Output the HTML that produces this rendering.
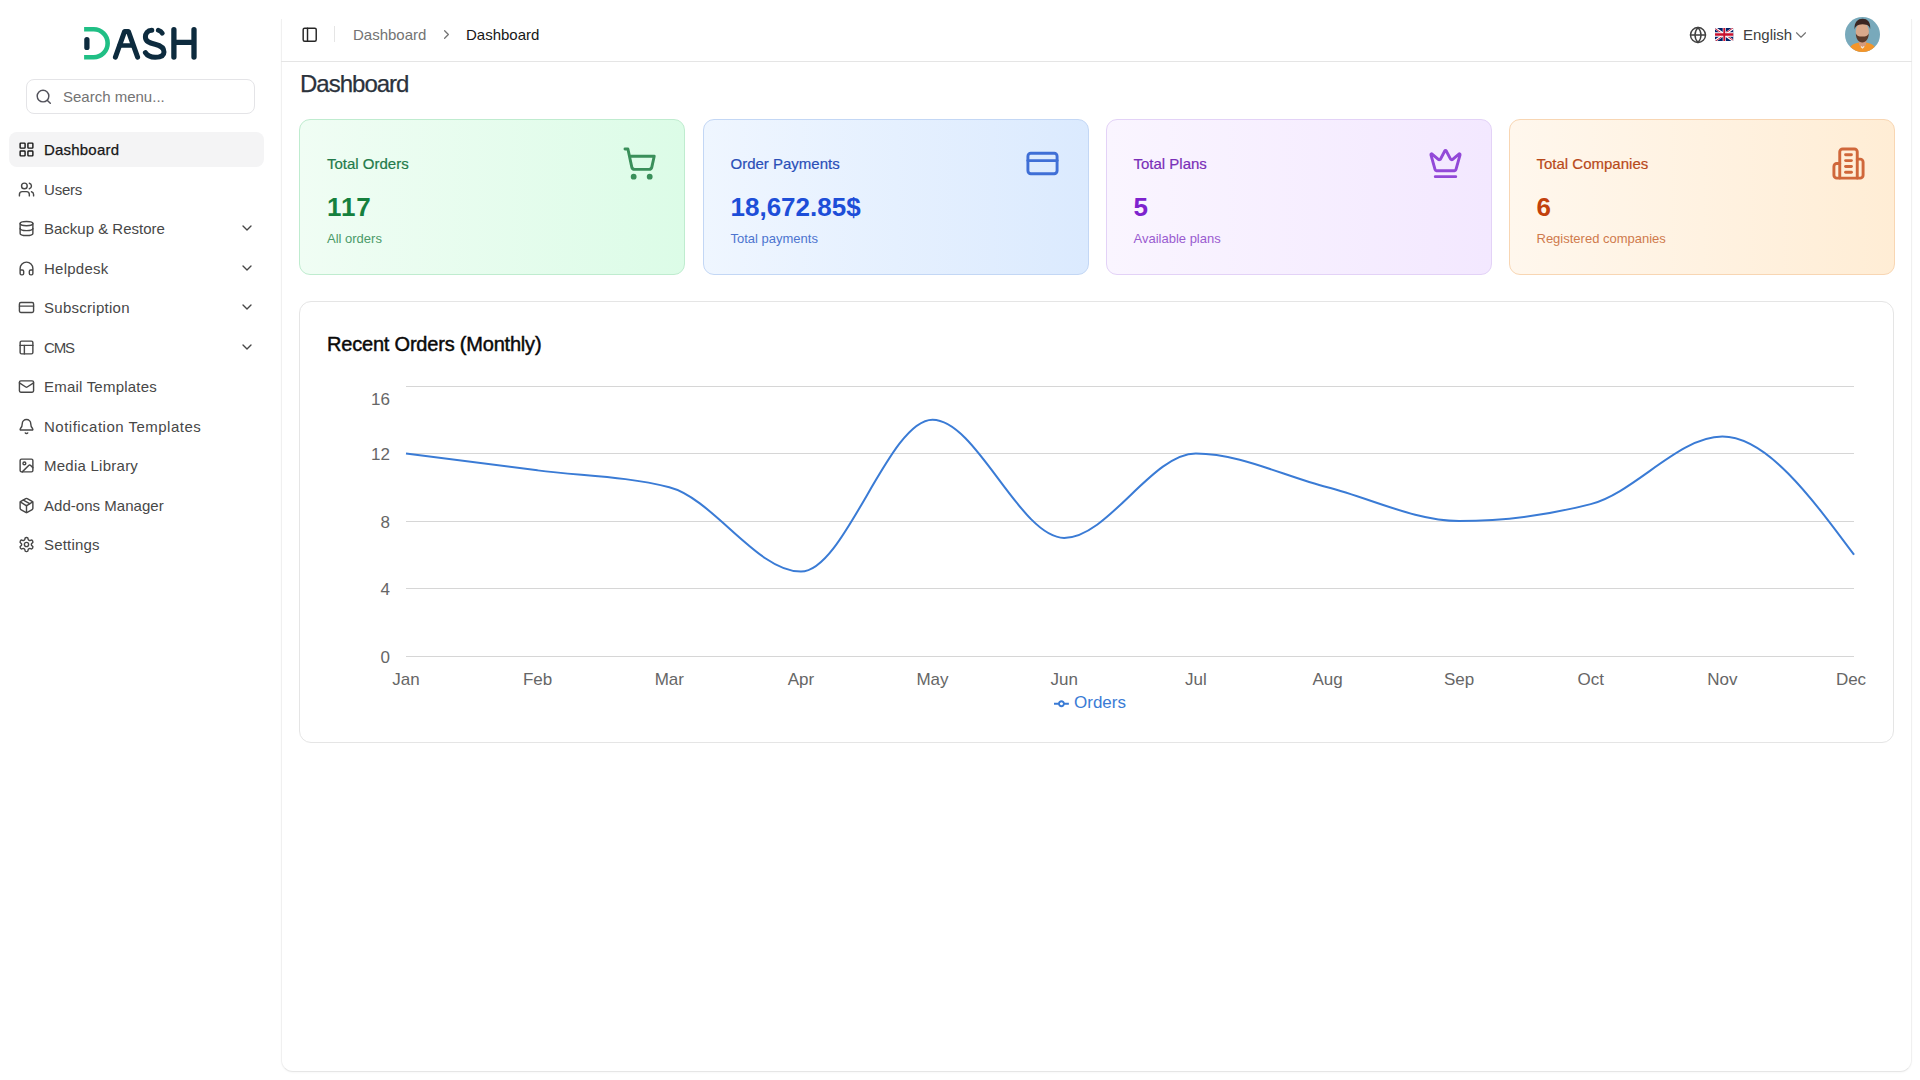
<!DOCTYPE html>
<html>
<head>
<meta charset="utf-8">
<style>
*{box-sizing:border-box;margin:0;padding:0}
html,body{width:1920px;height:1080px;overflow:hidden;background:#ffffff;font-family:"Liberation Sans",sans-serif;color:#262626;-webkit-font-smoothing:antialiased}
.abs{position:absolute}
svg{display:block}
.ic{position:absolute;fill:none;stroke:currentColor;stroke-width:2;stroke-linecap:round;stroke-linejoin:round}
.nav{position:absolute;left:9px;width:255px;height:35px;border-radius:8px}
.nav.active{background:#f4f4f5}
.nav .t{position:absolute;left:35px;top:0;line-height:35px;font-size:15px;white-space:nowrap}
.card{position:absolute;top:119px;width:386px;height:156px;border-radius:11px;border:1px solid}
.card .tt{position:absolute;left:27px;top:35px;font-size:15px;line-height:18px;white-space:nowrap}
.card .vv{position:absolute;left:27px;top:71.5px;font-size:26px;line-height:30px;font-weight:bold;white-space:nowrap}
.card .ss{position:absolute;left:27px;top:111px;font-size:13px;line-height:16px;white-space:nowrap}
</style>
</head>
<body>
<!-- sidebar -->
<div id="sidebar" class="abs" style="left:0;top:0;width:273px;height:1080px;">
  <svg class="abs" style="left:75px;top:18px" width="130" height="50" viewBox="75 18 130 50">
    <g fill="none" stroke-linecap="round" stroke-linejoin="round">
      <path d="M84.1 29.3H93.7A13.95 13.95 0 0 1 93.7 57.2H84.1" stroke="#20bf85" stroke-width="4.6" stroke-linecap="butt"/>
      <path d="M86.9 39.6V47.4" stroke="#0d2b3e" stroke-width="5.3"/>
      <path d="M115.4 57.2L124.6 31.4H128.4L137.6 57.2" stroke="#0d2b3e" stroke-width="5"/>
      <path d="M119.6 45.6H133" stroke="#0d2b3e" stroke-width="4.5"/>
      <path d="M151.8 30.2C147.5 30.4 145.4 33.3 145.4 37C145.4 41.6 149.6 43 155 44.3C160.5 45.6 164 47.3 164 51.9C164 55.5 160.8 57.2 155.2 57.2C150.6 57.2 147.2 55.5 145.4 52.6" stroke="#0d2b3e" stroke-width="5"/>
      <path d="M158.3 30.3C159.9 30.8 161.4 31.8 162.3 33.3" stroke="#0d2b3e" stroke-width="4.8"/>
      <path d="M173.9 29.6V57M194 29.6V57M174 42.4H194" stroke="#0d2b3e" stroke-width="5.3"/>
    </g>
  </svg>
  <div class="abs" style="left:26px;top:79px;width:229px;height:35px;border:1px solid #e4e4e7;border-radius:8px;">
    <svg class="ic" style="left:8.04px;top:8.24px;width:17.5px;height:17.5px;color:#52525b;stroke-width:2" viewBox="0 0 24 24"><circle cx="11" cy="11" r="8"/><path d="m21 21-4.3-4.3"/></svg>
    <div class="abs" style="left:36px;top:0;line-height:33px;font-size:15px;color:#737373">Search menu...</div>
  </div>
<div class="nav active" style="top:132.00px"><svg class="ic" style="left:8.8px;top:9px;width:17px;height:17px;color:#171717;stroke-width:2" viewBox="0 0 24 24"><rect width="7" height="7" x="3" y="3" rx="1"/><rect width="7" height="7" x="14" y="3" rx="1"/><rect width="7" height="7" x="14" y="14" rx="1"/><rect width="7" height="7" x="3" y="14" rx="1"/></svg><div class="t" style="letter-spacing:0.2px;color:#171717;-webkit-text-stroke:0.25px #171717;">Dashboard</div></div>
<div class="nav" style="top:171.50px"><svg class="ic" style="left:8.8px;top:9px;width:17px;height:17px;color:#474747;stroke-width:2" viewBox="0 0 24 24"><path d="M16 21v-2a4 4 0 0 0-4-4H6a4 4 0 0 0-4 4v2"/><circle cx="9" cy="7" r="4"/><path d="M22 21v-2a4 4 0 0 0-3-3.87"/><path d="M16 3.13a4 4 0 0 1 0 7.75"/></svg><div class="t" style="letter-spacing:-0.2px;color:#474747;">Users</div></div>
<div class="nav" style="top:211.00px"><svg class="ic" style="left:8.8px;top:9px;width:17px;height:17px;color:#474747;stroke-width:2" viewBox="0 0 24 24"><ellipse cx="12" cy="5" rx="9" ry="3"/><path d="M3 5V19A9 3 0 0 0 21 19V5"/><path d="M3 12A9 3 0 0 0 21 12"/></svg><div class="t" style="letter-spacing:0.0px;color:#474747;">Backup &amp; Restore</div><svg class="ic" style="left:230px;top:9px;width:16px;height:16px;color:#474747;stroke-width:2" viewBox="0 0 24 24"><path d="m6 9 6 6 6-6"/></svg></div>
<div class="nav" style="top:250.50px"><svg class="ic" style="left:8.8px;top:9px;width:17px;height:17px;color:#474747;stroke-width:2" viewBox="0 0 24 24"><path d="M3 14h3a2 2 0 0 1 2 2v3a2 2 0 0 1-2 2H5a2 2 0 0 1-2-2v-7a9 9 0 0 1 18 0v7a2 2 0 0 1-2 2h-1a2 2 0 0 1-2-2v-3a2 2 0 0 1 2-2h3"/></svg><div class="t" style="letter-spacing:0.25px;color:#474747;">Helpdesk</div><svg class="ic" style="left:230px;top:9px;width:16px;height:16px;color:#474747;stroke-width:2" viewBox="0 0 24 24"><path d="m6 9 6 6 6-6"/></svg></div>
<div class="nav" style="top:290.00px"><svg class="ic" style="left:8.8px;top:9px;width:17px;height:17px;color:#474747;stroke-width:2" viewBox="0 0 24 24"><rect width="20" height="14" x="2" y="5" rx="2"/><line x1="2" x2="22" y1="10" y2="10"/></svg><div class="t" style="letter-spacing:0.27px;color:#474747;">Subscription</div><svg class="ic" style="left:230px;top:9px;width:16px;height:16px;color:#474747;stroke-width:2" viewBox="0 0 24 24"><path d="m6 9 6 6 6-6"/></svg></div>
<div class="nav" style="top:329.50px"><svg class="ic" style="left:8.8px;top:9px;width:17px;height:17px;color:#474747;stroke-width:2" viewBox="0 0 24 24"><rect width="18" height="18" x="3" y="3" rx="2"/><path d="M3 9h18"/><path d="M9 21V9"/></svg><div class="t" style="letter-spacing:-1.2px;color:#474747;">CMS</div><svg class="ic" style="left:230px;top:9px;width:16px;height:16px;color:#474747;stroke-width:2" viewBox="0 0 24 24"><path d="m6 9 6 6 6-6"/></svg></div>
<div class="nav" style="top:369.00px"><svg class="ic" style="left:8.8px;top:9px;width:17px;height:17px;color:#474747;stroke-width:2" viewBox="0 0 24 24"><rect width="20" height="16" x="2" y="4" rx="2"/><path d="m22 7-8.97 5.7a1.94 1.94 0 0 1-2.06 0L2 7"/></svg><div class="t" style="letter-spacing:0.21px;color:#474747;">Email Templates</div></div>
<div class="nav" style="top:408.50px"><svg class="ic" style="left:8.8px;top:9px;width:17px;height:17px;color:#474747;stroke-width:2" viewBox="0 0 24 24"><path d="M10.268 21a2 2 0 0 0 3.464 0"/><path d="M3.262 15.326A1 1 0 0 0 4 17h16a1 1 0 0 0 .74-1.673C19.41 13.956 18 12.499 18 8A6 6 0 0 0 6 8c0 4.499-1.411 5.956-2.738 7.326"/></svg><div class="t" style="letter-spacing:0.49px;color:#474747;">Notification Templates</div></div>
<div class="nav" style="top:448.00px"><svg class="ic" style="left:8.8px;top:9px;width:17px;height:17px;color:#474747;stroke-width:2" viewBox="0 0 24 24"><rect width="18" height="18" x="3" y="3" rx="2" ry="2"/><circle cx="9" cy="9" r="2"/><path d="m21 15-3.086-3.086a2 2 0 0 0-2.828 0L6 21"/></svg><div class="t" style="letter-spacing:0.25px;color:#474747;">Media Library</div></div>
<div class="nav" style="top:487.50px"><svg class="ic" style="left:8.8px;top:9px;width:17px;height:17px;color:#474747;stroke-width:2" viewBox="0 0 24 24"><path d="M11 21.73a2 2 0 0 0 2 0l7-4A2 2 0 0 0 21 16V8a2 2 0 0 0-1-1.73l-7-4a2 2 0 0 0-2 0l-7 4A2 2 0 0 0 3 8v8a2 2 0 0 0 1 1.73z"/><path d="M12 22V12"/><path d="m3.3 7 7.703 4.734a2 2 0 0 0 1.994 0L20.7 7"/><path d="m7.5 4.27 9 5.15"/></svg><div class="t" style="letter-spacing:0.03px;color:#474747;">Add-ons Manager</div></div>
<div class="nav" style="top:527.00px"><svg class="ic" style="left:8.8px;top:9px;width:17px;height:17px;color:#474747;stroke-width:2" viewBox="0 0 24 24"><path d="M12.22 2h-.44a2 2 0 0 0-2 2v.18a2 2 0 0 1-1 1.73l-.43.25a2 2 0 0 1-2 0l-.15-.08a2 2 0 0 0-2.73.73l-.22.38a2 2 0 0 0 .73 2.73l.15.1a2 2 0 0 1 1 1.72v.51a2 2 0 0 1-1 1.74l-.15.09a2 2 0 0 0-.73 2.730l.22.38a2 2 0 0 0 2.73.73l.15-.08a2 2 0 0 1 2 0l.43.25a2 2 0 0 1 1 1.73V20a2 2 0 0 0 2 2h.44a2 2 0 0 0 2-2v-.18a2 2 0 0 1 1-1.73l.43-.25a2 2 0 0 1 2 0l.15.08a2 2 0 0 0 2.73-.73l.22-.39a2 2 0 0 0-.73-2.73l-.15-.08a2 2 0 0 1-1-1.740v-.5a2 2 0 0 1 1-1.74l.15-.09a2 2 0 0 0 .73-2.73l-.22-.38a2 2 0 0 0-2.73-.73l-.15.08a2 2 0 0 1-2 0l-.43-.25a2 2 0 0 1-1-1.73V4a2 2 0 0 0-2-2z"/><circle cx="12" cy="12" r="3"/></svg><div class="t" style="letter-spacing:0.2px;color:#474747;">Settings</div></div>

</div>

<!-- main panel -->
<div id="panel" class="abs" style="left:281px;top:19px;width:1631px;height:1053px;border:1px solid #f0f0f0;border-top:none;border-bottom-color:#e6e6e6;border-radius:0 0 12px 12px;background:#fff;box-shadow:0 1px 2px rgba(0,0,0,0.03)"></div>

<!-- topbar -->
<svg class="ic" style="left:300.95px;top:25.95px;width:17.4px;height:17.4px;color:#262626;stroke-width:2" viewBox="0 0 24 24"><rect width="18" height="18" x="3" y="3" rx="2"/><path d="M9 3v18"/></svg>
<div class="abs" style="left:334px;top:26px;width:1px;height:16px;background:#e5e5e5"></div>
<div class="abs" style="left:353px;top:26px;font-size:15px;line-height:18px;color:#737373;white-space:nowrap">Dashboard</div>
<svg class="ic" style="left:439px;top:27px;width:15px;height:15px;color:#737373;stroke-width:2" viewBox="0 0 24 24"><path d="m9 18 6-6-6-6"/></svg>
<div class="abs" style="left:466px;top:26px;font-size:15px;line-height:18px;color:#171717;white-space:nowrap">Dashboard</div>
<div class="abs" style="left:281px;top:61px;width:1631px;height:1px;background:#e5e5e5"></div>
<!-- lang -->
<svg class="ic" style="left:1688.8px;top:26.2px;width:18px;height:18px;color:#404040;stroke-width:1.9" viewBox="0 0 24 24"><circle cx="12" cy="12" r="10"/><path d="M12 2a14.5 14.5 0 0 0 0 20 14.5 14.5 0 0 0 0-20"/><path d="M2 12h20"/></svg>
<svg class="abs" style="left:1715.3px;top:28.1px;border-radius:1.5px" width="18.5" height="13" viewBox="0 0 60 30" preserveAspectRatio="none">
  <clipPath id="s"><path d="M0,0 v30 h60 v-30 z"/></clipPath>
  <clipPath id="t"><path d="M30,15 h30 v15 z v15 h-30 z h-30 v-15 z v-15 h30 z"/></clipPath>
  <g clip-path="url(#s)">
    <path d="M0,0 v30 h60 v-30 z" fill="#012169"/>
    <path d="M0,0 L60,30 M60,0 L0,30" stroke="#fff" stroke-width="6"/>
    <path d="M0,0 L60,30 M60,0 L0,30" clip-path="url(#t)" stroke="#C8102E" stroke-width="4"/>
    <path d="M30,0 v30 M0,15 h60" stroke="#fff" stroke-width="10"/>
    <path d="M30,0 v30 M0,15 h60" stroke="#C8102E" stroke-width="6"/>
  </g>
</svg>
<div class="abs" style="left:1743px;top:26px;font-size:15px;line-height:18px;color:#404040;white-space:nowrap">English</div>
<svg class="ic" style="left:1792px;top:25.85px;width:18px;height:18px;color:#737373;stroke-width:1.5" viewBox="0 0 24 24"><path d="m6 9 6 6 6-6"/></svg>
<!-- avatar -->
<svg class="abs" style="left:1845px;top:17px" width="35" height="35" viewBox="0 0 35 35">
  <defs><clipPath id="av"><circle cx="17.5" cy="17.5" r="17.5"/></clipPath>
  <filter id="bl" x="-20%" y="-20%" width="140%" height="140%"><feGaussianBlur stdDeviation="0.7"/></filter></defs>
  <g clip-path="url(#av)">
    <rect width="35" height="35" fill="#78a9bb"/>
    <g filter="url(#bl)">
      <path d="M3 36 C4 28 9 25.5 17.5 25.5 C26 25.5 31 28 32 36Z" fill="#f4952a"/>
      <path d="M13.5 22 L21.5 22 L21 28 L17.5 31 L14 28Z" fill="#d49a7c"/>
      <ellipse cx="17.3" cy="14.5" rx="6.6" ry="9" fill="#d9a98b"/>
      <path d="M10.8 16.5 C11 22 13.5 25.5 17.3 25.5 C21 25.5 23.6 22 23.8 16.5 C22.5 19 21 19.5 17.3 19.5 C13.6 19.5 12 19 10.8 16.5Z" fill="#5b3b2b"/>
      <path d="M9.5 12.5 C9 5 13 1.8 17.5 1.8 C22.5 1.8 25.8 5 25.2 12 C24.2 9 23.5 7.5 17.5 7.2 C12 7.5 10.8 9 9.5 12.5Z" fill="#3a2822"/>
      <path d="M16 29.5 L17.5 31 L19.2 29.3" stroke="#f4e8dc" stroke-width="1.2" fill="none"/>
    </g>
  </g>
</svg>
<!-- title -->
<div class="abs" style="left:300px;top:72px;font-size:24px;line-height:24px;color:#2b323c;-webkit-text-stroke:0.25px #2b323c;letter-spacing:-1px;white-space:nowrap">Dashboard</div>

<!-- cards -->
<div class="card" style="left:299px;background:linear-gradient(to right,#f0fdf4,#dcfce7);border-color:#bfeccf">
  <div class="tt" style="color:#237a4a;-webkit-text-stroke:0.2px #237a4a">Total Orders</div>
  <div class="vv" style="color:#15803d;letter-spacing:0.9px">117</div>
  <div class="ss" style="color:#4a9a68">All orders</div>
  <svg class="ic" style="left:321.6px;top:26px;width:35px;height:35px;color:#3a8f5a;stroke-width:2" viewBox="0 0 24 24"><circle cx="8" cy="21" r="1"/><circle cx="19" cy="21" r="1"/><path d="M2.05 2.05h2l2.66 12.42a2 2 0 0 0 2 1.58h9.78a2 2 0 0 0 1.95-1.57l1.65-7.43H5.12"/></svg>
</div>
<div class="card" style="left:702.5px;background:linear-gradient(to right,#eff6ff,#dbeafe);border-color:#c3d7f5">
  <div class="tt" style="color:#2a4fb8;-webkit-text-stroke:0.2px #2a4fb8">Order Payments</div>
  <div class="vv" style="color:#1d4ed8">18,672.85$</div>
  <div class="ss" style="color:#4c74cf">Total payments</div>
  <svg class="ic" style="left:321.6px;top:26px;width:35px;height:35px;color:#3f6fd6;stroke-width:2" viewBox="0 0 24 24"><rect width="20" height="14" x="2" y="5" rx="2"/><line x1="2" x2="22" y1="10" y2="10"/></svg>
</div>
<div class="card" style="left:1105.5px;background:linear-gradient(to right,#faf5ff,#f3e8ff);border-color:#e3d2f7">
  <div class="tt" style="color:#7a2fb8;-webkit-text-stroke:0.2px #7a2fb8">Total Plans</div>
  <div class="vv" style="color:#7e22ce">5</div>
  <div class="ss" style="color:#9a5bd0">Available plans</div>
  <svg class="ic" style="left:321.6px;top:26px;width:35px;height:35px;color:#9248d8;stroke-width:2" viewBox="0 0 24 24"><path d="M11.562 3.266a.5.5 0 0 1 .876 0L15.39 8.87a1 1 0 0 0 1.516.294L21.183 5.5a.5.5 0 0 1 .798.519l-2.834 10.246a1 1 0 0 1-.956.734H5.81a1 1 0 0 1-.957-.734L2.02 6.02a.5.5 0 0 1 .798-.519l4.276 3.664a1 1 0 0 0 1.516-.294z"/><path d="M5 21h14"/></svg>
</div>
<div class="card" style="left:1508.5px;background:linear-gradient(to right,#fff7ed,#ffedd5);border-color:#f8d6b3">
  <div class="tt" style="color:#b8491a;-webkit-text-stroke:0.2px #b8491a">Total Companies</div>
  <div class="vv" style="color:#c2410c">6</div>
  <div class="ss" style="color:#cf7a4c">Registered companies</div>
  <svg class="ic" style="left:321.6px;top:26px;width:35px;height:35px;color:#d0673a;stroke-width:2" viewBox="0 0 24 24"><path d="M6 22V4a2 2 0 0 1 2-2h8a2 2 0 0 1 2 2v18Z"/><path d="M6 12H4a2 2 0 0 0-2 2v6a2 2 0 0 0 2 2h2"/><path d="M18 9h2a2 2 0 0 1 2 2v9a2 2 0 0 1-2 2h-2"/><path d="M10 6h4"/><path d="M10 10h4"/><path d="M10 14h4"/><path d="M10 18h4"/></svg>
</div>

<!-- chart card -->
<div class="abs" style="left:299px;top:301px;width:1595px;height:442px;border:1px solid #e5e5e5;border-radius:12px;background:#fff"></div>
<div class="abs" style="left:327px;top:333px;font-size:20px;line-height:22px;color:#0a0a0a;-webkit-text-stroke:0.45px #0a0a0a;letter-spacing:-0.2px;white-space:nowrap">Recent Orders (Monthly)</div>
<svg class="abs" style="left:0;top:0" width="1920" height="1080" viewBox="0 0 1920 1080">
  <g stroke="#d6d6d6" stroke-width="1">
    <line x1="406" x2="1854" y1="386.5" y2="386.5"/>
    <line x1="406" x2="1854" y1="453.5" y2="453.5"/>
    <line x1="406" x2="1854" y1="521.5" y2="521.5"/>
    <line x1="406" x2="1854" y1="588.5" y2="588.5"/>
    <line x1="406" x2="1854" y1="656.5" y2="656.5"/>
  </g>
  <g font-family="Liberation Sans" font-size="17" fill="#666" text-anchor="end">
    <text x="390" y="405">16</text>
    <text x="390" y="460">12</text>
    <text x="390" y="528">8</text>
    <text x="390" y="595">4</text>
    <text x="390" y="663">0</text>
  </g>
  <g font-family="Liberation Sans" font-size="17" fill="#666" text-anchor="middle">
    <text x="406" y="685">Jan</text><text x="537.6" y="685">Feb</text><text x="669.3" y="685">Mar</text><text x="800.9" y="685">Apr</text>
    <text x="932.5" y="685">May</text><text x="1064.2" y="685">Jun</text><text x="1195.8" y="685">Jul</text><text x="1327.5" y="685">Aug</text>
    <text x="1459.1" y="685">Sep</text><text x="1590.7" y="685">Oct</text><text x="1722.4" y="685">Nov</text><text x="1851" y="685">Dec</text>
  </g>
  <path d="M406.00,453.50C449.88,459.12,493.76,464.75,537.64,470.38C581.52,476.00,625.39,476.00,669.27,487.25C713.15,498.50,757.03,571.62,800.91,571.62C844.79,571.62,888.67,419.75,932.55,419.75C976.42,419.75,1020.30,537.88,1064.18,537.88C1108.06,537.88,1151.94,453.50,1195.82,453.50C1239.70,453.50,1283.58,476.00,1327.45,487.25C1371.33,498.50,1415.21,521.00,1459.09,521.00C1502.97,521.00,1546.85,515.38,1590.73,504.12C1634.61,492.88,1678.48,436.62,1722.36,436.62C1766.24,436.62,1810.12,495.69,1854.00,554.75" fill="none" stroke="#3a7bd5" stroke-width="2"/>
  <g transform="translate(1054,696.3) scale(0.465)" fill="none" stroke="#3a7bd5" stroke-width="4">
    <path d="M0,16h10.67A5.33,5.33,0,1,1,21.33,16H32M21.33,16A5.33,5.33,0,1,1,10.67,16"/>
  </g>
  <text x="1074" y="708" font-family="Liberation Sans" font-size="17" fill="#3a7bd5">Orders</text>
</svg>
</body>
</html>
